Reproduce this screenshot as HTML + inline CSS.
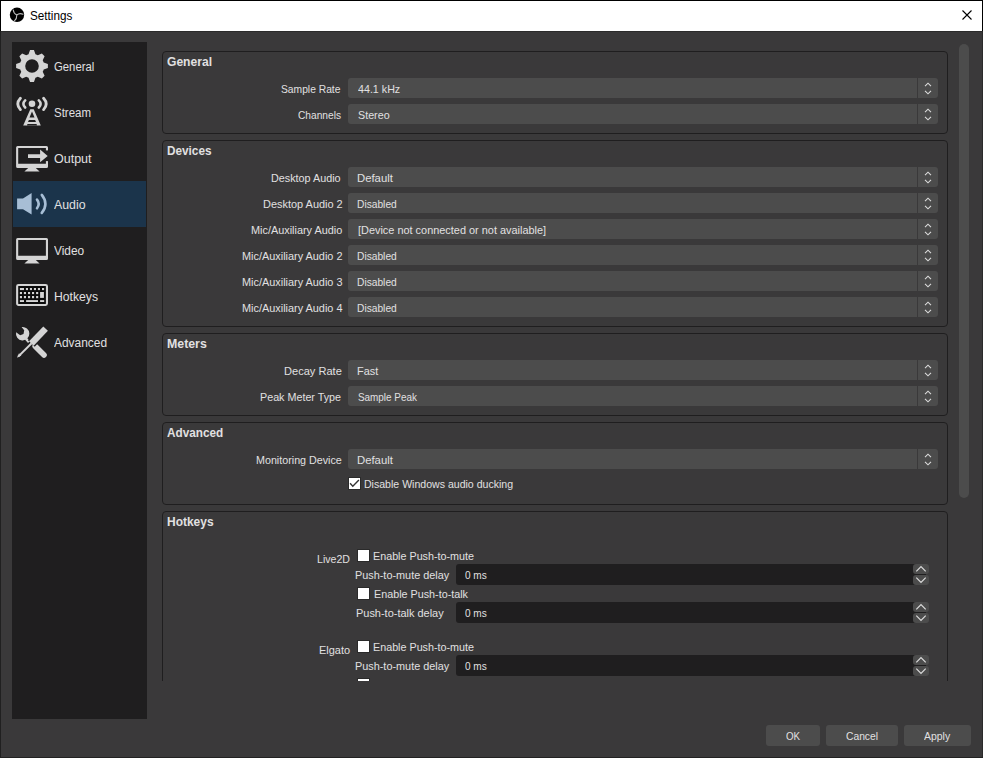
<!DOCTYPE html>
<html><head><meta charset="utf-8"><title>Settings</title><style>
html,body{margin:0;padding:0;}
body{width:983px;height:758px;overflow:hidden;background:#3a393a;position:relative;
 font-family:"Liberation Sans",sans-serif;font-size:11px;color:#e1e0e1;}
.r{position:absolute;}
svg{display:block;}
.t{position:absolute;white-space:nowrap;line-height:13px;letter-spacing:-0.25px;}
.title{position:absolute;left:0;top:0;width:983px;height:31px;background:#fff;}
.vp{position:absolute;left:0;top:0;width:983px;height:681px;overflow:hidden;}
.gb{position:absolute;left:162px;width:786px;border:1px solid #1f1e1f;border-radius:4px;box-sizing:border-box;}
.cb{position:absolute;left:348px;width:590px;height:20px;background:#4c4c4c;border-radius:3px;}
.ck{position:absolute;width:11px;height:11px;background:#fff;box-shadow:0 0 0 1px #2a2a2a;}
.sp{position:absolute;left:456px;width:470px;height:21px;background:#1f1e1f;border-radius:3px;}
.sb{position:absolute;left:913px;width:16px;height:10px;background:#4c4c4c;border-radius:3px;}
.btn{position:absolute;top:725px;height:21px;background:#4c4c4c;border-radius:3px;text-align:center;line-height:21px;padding-top:1px;box-sizing:border-box;letter-spacing:-0.2px;}
</style></head>
<body>
<div class="title"></div>
<div class="r" style="left:1px;top:31px;width:981px;height:1px;background:#2b2b2b"></div>
<svg class="r" style="left:8px;top:6px" width="18" height="18" viewBox="0 0 18 18"><circle cx="9" cy="8.8" r="7.2" fill="#000"/><path d="M8.8 9.0 Q5.6 7.6 5.3 4.0 M8.8 9.0 Q11.6 6.6 15.0 8.3 M8.8 9.0 Q9.0 12.6 6.4 14.9" fill="none" stroke="#bdbdbd" stroke-width="1.1" stroke-linecap="round"/></svg>
<div class="t" style="top:10px;left:30.2px;letter-spacing:0;transform:scaleX(0.9767);transform-origin:0 0;color:#000;font-size:12px;">Settings</div>
<svg class="r" style="left:961px;top:9px" width="13" height="13" viewBox="0 0 13 13"><path d="M1.5 1.5 L10.5 10.5 M10.5 1.5 L1.5 10.5" stroke="#000" stroke-width="1.1"/></svg>
<div class="r" style="left:12px;top:42px;width:135px;height:677px;background:#1f1e1f;"></div>
<div class="r" style="left:13px;top:181px;width:133px;height:46px;background:#1b344b;"></div>
<div class="r" style="left:16px;top:50px"><svg width="32" height="32" viewBox="0 0 32 32"><path d="M12.54 4.30 L14.05 0.12 L17.95 0.12 L19.46 4.30 A12.2 12.2 0 0 1 21.82 5.28 L25.85 3.39 L28.61 6.15 L26.72 10.18 A12.2 12.2 0 0 1 27.70 12.54 L31.88 14.05 L31.88 17.95 L27.70 19.46 A12.2 12.2 0 0 1 26.72 21.82 L28.61 25.85 L25.85 28.61 L21.82 26.72 A12.2 12.2 0 0 1 19.46 27.70 L17.95 31.88 L14.05 31.88 L12.54 27.70 A12.2 12.2 0 0 1 10.18 26.72 L6.15 28.61 L3.39 25.85 L5.28 21.82 A12.2 12.2 0 0 1 4.30 19.46 L0.12 17.95 L0.12 14.05 L4.30 12.54 A12.2 12.2 0 0 1 5.28 10.18 L3.39 6.15 L6.15 3.39 L10.18 5.28 A12.2 12.2 0 0 1 12.54 4.30 Z M16 9.2 A6.8 6.8 0 1 0 16 22.8 A6.8 6.8 0 1 0 16 9.2 Z" fill="#d4d4d4" fill-rule="evenodd"/></svg></div>
<div class="t" style="top:61px;left:54px;letter-spacing:0;transform:scaleX(0.9429);transform-origin:0 0;font-size:12px;">General</div>
<div class="r" style="left:14px;top:94px"><svg width="36" height="36" viewBox="0 0 36 36"><circle cx="18" cy="9.7" r="3.3" fill="#d4d4d4"/><path d="M6.4 4.2 Q1.2 9.9 6.4 15.6" fill="none" stroke="#d4d4d4" stroke-width="2.8" stroke-linecap="round"/><path d="M29.6 4.2 Q34.8 9.9 29.6 15.6" fill="none" stroke="#d4d4d4" stroke-width="2.8" stroke-linecap="round"/><path d="M11.2 6.4 Q7.6 9.9 11.2 13.5" fill="none" stroke="#d4d4d4" stroke-width="2.6" stroke-linecap="round"/><path d="M24.8 6.4 Q28.4 9.9 24.8 13.5" fill="none" stroke="#d4d4d4" stroke-width="2.6" stroke-linecap="round"/><path d="M16.3 15.2 L19.7 15.2 L26.8 31.6 L9.2 31.6 Z M18 17.6 L20.5 23.5 L15.5 23.5 Z M14.9 25.9 L21.1 25.9 L22.0 28.1 L14.0 28.1 Z M13.5 30 L22.5 30 L23.2 31.7 L12.8 31.7 Z" fill="#d4d4d4" fill-rule="evenodd"/></svg></div>
<div class="t" style="top:107px;left:54px;letter-spacing:0;transform:scaleX(0.9553);transform-origin:0 0;font-size:12px;">Stream</div>
<div class="r" style="left:14px;top:140px"><svg width="36" height="36" viewBox="0 0 36 36"><path d="M3.6 5.9 L32.5 5.9 Q34 5.9 34 7.4 L34 26.5 Q34 28 32.5 28 L3.6 28 Q2.1 28 2.1 26.5 L2.1 7.4 Q2.1 5.9 3.6 5.9 Z M4.2 8.0 L4.2 23.7 L31.9 23.7 L31.9 8.0 Z" fill="#d4d4d4" fill-rule="evenodd"/><rect x="31" y="10.4" width="4" height="10.7" fill="#1f1e1f"/><path d="M14.2 28 L21.8 28 L25.6 31.6 L10.4 31.6 Z" fill="#d4d4d4"/><path d="M14 14.2 L26.1 14.2 L26.1 9.5 L33.7 16.1 L26.1 22.3 L26.1 18 L14 18 Z" fill="#d4d4d4"/></svg></div>
<div class="t" style="top:153px;left:54px;letter-spacing:0;transform:scaleX(1.0417);transform-origin:0 0;font-size:12px;">Output</div>
<div class="r" style="left:14px;top:186px"><svg width="36" height="36" viewBox="0 0 36 36"><path d="M3.1 12.6 L9 12.6 L17.6 7.1 L17.6 28.5 L9 23.3 L3.1 23.3 Z" fill="#a7bed5"/><path d="M23.0 13.6 Q26.4 17.95 23.0 22.3" fill="none" stroke="#a7bed5" stroke-width="2.6" stroke-linecap="round"/><path d="M27.8 8.9 Q35.0 17.9 27.8 26.9" fill="none" stroke="#a7bed5" stroke-width="2.6" stroke-linecap="round"/></svg></div>
<div class="t" style="top:199px;left:54px;letter-spacing:0;transform:scaleX(1.029);transform-origin:0 0;font-size:12px;">Audio</div>
<div class="r" style="left:14px;top:232px"><svg width="36" height="36" viewBox="0 0 36 36"><path d="M3.6 5.9 L32.5 5.9 Q34 5.9 34 7.4 L34 26.5 Q34 28 32.5 28 L3.6 28 Q2.1 28 2.1 26.5 L2.1 7.4 Q2.1 5.9 3.6 5.9 Z M4.2 8.0 L4.2 23.7 L31.9 23.7 L31.9 8.0 Z" fill="#d4d4d4" fill-rule="evenodd"/><path d="M14.2 28 L21.8 28 L25.6 31.6 L10.4 31.6 Z" fill="#d4d4d4"/></svg></div>
<div class="t" style="top:245px;left:54px;letter-spacing:0;transform:scaleX(0.99);transform-origin:0 0;font-size:12px;">Video</div>
<div class="r" style="left:14px;top:278px"><svg width="36" height="36" viewBox="0 0 36 36"><rect x="3.15" y="6.95" width="29.8" height="20" rx="1.4" fill="#0b0b0b" stroke="#d4d4d4" stroke-width="2.1"/><rect x="5.9" y="10" width="4.10" height="2.10" fill="#d4d4d4"/><rect x="11.9" y="10" width="2.10" height="2.10" fill="#d4d4d4"/><rect x="15.9" y="10" width="2.10" height="2.10" fill="#d4d4d4"/><rect x="19.9" y="10" width="2.10" height="2.10" fill="#d4d4d4"/><rect x="23.9" y="10" width="2.10" height="2.10" fill="#d4d4d4"/><rect x="28.0" y="10" width="2.10" height="2.10" fill="#d4d4d4"/><rect x="5.9" y="14" width="2.10" height="2.10" fill="#d4d4d4"/><rect x="5.9" y="18" width="2.10" height="2.20" fill="#d4d4d4"/><rect x="9.9" y="14" width="2.10" height="2.10" fill="#d4d4d4"/><rect x="9.9" y="18" width="2.10" height="2.20" fill="#d4d4d4"/><rect x="14.0" y="14" width="2.10" height="2.10" fill="#d4d4d4"/><rect x="14.0" y="18" width="2.10" height="2.20" fill="#d4d4d4"/><rect x="18.0" y="14" width="2.10" height="2.10" fill="#d4d4d4"/><rect x="18.0" y="18" width="2.10" height="2.20" fill="#d4d4d4"/><rect x="22.1" y="14" width="2.10" height="2.10" fill="#d4d4d4"/><rect x="22.1" y="18" width="2.10" height="2.20" fill="#d4d4d4"/><rect x="26.1" y="14" width="3.80" height="5.90" fill="#d4d4d4"/><rect x="5.9" y="22.1" width="4.10" height="1.90" fill="#d4d4d4"/><rect x="12.1" y="22.1" width="11.90" height="1.90" fill="#d4d4d4"/><rect x="26.1" y="22.1" width="4.10" height="1.90" fill="#d4d4d4"/></svg></div>
<div class="t" style="top:291px;left:54px;letter-spacing:0;transform:scaleX(1.0167);transform-origin:0 0;font-size:12px;">Hotkeys</div>
<div class="r" style="left:14px;top:324px"><svg width="36" height="36" viewBox="0 0 36 36"><path d="M21.2 22.3 L30.0 31.1" stroke="#d4d4d4" stroke-width="5.6" stroke-linecap="round"/><path d="M7.6 3.1 A6.7 6.7 0 1 1 2.1 8.3 L6.2 11.2 L9.5 10.0 L10.2 6.2 Z" fill="#d4d4d4"/><path d="M11.8 14.6 L15.0 18.2" stroke="#d4d4d4" stroke-width="2.6"/><path d="M31.9 4.3 L17.35 19.45" stroke="#1f1e1f" stroke-width="9.4"/><path d="M31.6 4.6 L17.35 19.45" stroke="#d4d4d4" stroke-width="6.4"/><path d="M17.6 19.2 L4.2 32.6" stroke="#d4d4d4" stroke-width="2.0"/><path d="M3.0 33.8 L5.0 29.2 L7.4 31.6 Z" fill="#d4d4d4"/></svg></div>
<div class="t" style="top:337px;left:54px;letter-spacing:0;transform:scaleX(0.9943);transform-origin:0 0;font-size:12px;">Advanced</div>
<div class="vp">
<div class="gb" style="top:51px;height:83px;"></div>
<div class="t" style="top:56px;left:167px;letter-spacing:0;transform:scaleX(1.0068);transform-origin:0 0;font-weight:bold;font-size:12px;">General</div>
<div class="cb" style="top:78px;"></div>
<div class="r" style="left:917px;top:78px;width:1px;height:20px;background:#3a393a"></div>
<div class="r" style="left:924px;top:82px;width:8px;height:5px"><svg width="8" height="5" viewBox="0 0 8 5"><path d="M1 4.2 L4 1.2 L7 4.2" fill="none" stroke="#dcdcdc" stroke-width="1.1"/></svg></div>
<div class="r" style="left:924px;top:90px;width:8px;height:5px"><svg width="8" height="5" viewBox="0 0 8 5"><path d="M1 0.8 L4 3.8 L7 0.8" fill="none" stroke="#dcdcdc" stroke-width="1.1"/></svg></div>
<div class="t" style="top:83px;left:358.0px;letter-spacing:0;transform:scaleX(0.9721);transform-origin:0 0;">44.1 kHz</div>
<div class="t" style="top:83px;left:281.4px;letter-spacing:0;transform:scaleX(0.9344);transform-origin:0 0;">Sample Rate</div>
<div class="cb" style="top:104px;"></div>
<div class="r" style="left:917px;top:104px;width:1px;height:20px;background:#3a393a"></div>
<div class="r" style="left:924px;top:108px;width:8px;height:5px"><svg width="8" height="5" viewBox="0 0 8 5"><path d="M1 4.2 L4 1.2 L7 4.2" fill="none" stroke="#dcdcdc" stroke-width="1.1"/></svg></div>
<div class="r" style="left:924px;top:116px;width:8px;height:5px"><svg width="8" height="5" viewBox="0 0 8 5"><path d="M1 0.8 L4 3.8 L7 0.8" fill="none" stroke="#dcdcdc" stroke-width="1.1"/></svg></div>
<div class="t" style="top:109px;left:358.0px;letter-spacing:0;transform:scaleX(0.975);transform-origin:0 0;">Stereo</div>
<div class="t" style="top:109px;left:297.7px;letter-spacing:0;transform:scaleX(0.9255);transform-origin:0 0;">Channels</div>
<div class="gb" style="top:140px;height:187px;"></div>
<div class="t" style="top:145px;left:167px;letter-spacing:0;transform:scaleX(0.98);transform-origin:0 0;font-weight:bold;font-size:12px;">Devices</div>
<div class="cb" style="top:167px;"></div>
<div class="r" style="left:917px;top:167px;width:1px;height:20px;background:#3a393a"></div>
<div class="r" style="left:924px;top:171px;width:8px;height:5px"><svg width="8" height="5" viewBox="0 0 8 5"><path d="M1 4.2 L4 1.2 L7 4.2" fill="none" stroke="#dcdcdc" stroke-width="1.1"/></svg></div>
<div class="r" style="left:924px;top:179px;width:8px;height:5px"><svg width="8" height="5" viewBox="0 0 8 5"><path d="M1 0.8 L4 3.8 L7 0.8" fill="none" stroke="#dcdcdc" stroke-width="1.1"/></svg></div>
<div class="t" style="top:172px;left:357.0px;letter-spacing:0;transform:scaleX(1.0294);transform-origin:0 0;">Default</div>
<div class="t" style="top:172px;left:271.3px;letter-spacing:0;transform:scaleX(0.98);transform-origin:0 0;">Desktop Audio</div>
<div class="cb" style="top:193px;"></div>
<div class="r" style="left:917px;top:193px;width:1px;height:20px;background:#3a393a"></div>
<div class="r" style="left:924px;top:197px;width:8px;height:5px"><svg width="8" height="5" viewBox="0 0 8 5"><path d="M1 4.2 L4 1.2 L7 4.2" fill="none" stroke="#dcdcdc" stroke-width="1.1"/></svg></div>
<div class="r" style="left:924px;top:205px;width:8px;height:5px"><svg width="8" height="5" viewBox="0 0 8 5"><path d="M1 0.8 L4 3.8 L7 0.8" fill="none" stroke="#dcdcdc" stroke-width="1.1"/></svg></div>
<div class="t" style="top:198px;left:357.0px;letter-spacing:0;transform:scaleX(0.9286);transform-origin:0 0;">Disabled</div>
<div class="t" style="top:198px;left:262.5px;letter-spacing:0;transform:scaleX(0.9949);transform-origin:0 0;">Desktop Audio 2</div>
<div class="cb" style="top:219px;"></div>
<div class="r" style="left:917px;top:219px;width:1px;height:20px;background:#3a393a"></div>
<div class="r" style="left:924px;top:223px;width:8px;height:5px"><svg width="8" height="5" viewBox="0 0 8 5"><path d="M1 4.2 L4 1.2 L7 4.2" fill="none" stroke="#dcdcdc" stroke-width="1.1"/></svg></div>
<div class="r" style="left:924px;top:231px;width:8px;height:5px"><svg width="8" height="5" viewBox="0 0 8 5"><path d="M1 0.8 L4 3.8 L7 0.8" fill="none" stroke="#dcdcdc" stroke-width="1.1"/></svg></div>
<div class="t" style="top:224px;left:358.0px;letter-spacing:0;transform:scaleX(0.9921);transform-origin:0 0;">[Device not connected or not available]</div>
<div class="t" style="top:224px;left:250.8px;letter-spacing:0;transform:scaleX(0.989);transform-origin:0 0;">Mic/Auxiliary Audio</div>
<div class="cb" style="top:245px;"></div>
<div class="r" style="left:917px;top:245px;width:1px;height:20px;background:#3a393a"></div>
<div class="r" style="left:924px;top:249px;width:8px;height:5px"><svg width="8" height="5" viewBox="0 0 8 5"><path d="M1 4.2 L4 1.2 L7 4.2" fill="none" stroke="#dcdcdc" stroke-width="1.1"/></svg></div>
<div class="r" style="left:924px;top:257px;width:8px;height:5px"><svg width="8" height="5" viewBox="0 0 8 5"><path d="M1 0.8 L4 3.8 L7 0.8" fill="none" stroke="#dcdcdc" stroke-width="1.1"/></svg></div>
<div class="t" style="top:250px;left:357.0px;letter-spacing:0;transform:scaleX(0.9286);transform-origin:0 0;">Disabled</div>
<div class="t" style="top:250px;left:241.8px;letter-spacing:0;transform:scaleX(0.99);transform-origin:0 0;">Mic/Auxiliary Audio 2</div>
<div class="cb" style="top:271px;"></div>
<div class="r" style="left:917px;top:271px;width:1px;height:20px;background:#3a393a"></div>
<div class="r" style="left:924px;top:275px;width:8px;height:5px"><svg width="8" height="5" viewBox="0 0 8 5"><path d="M1 4.2 L4 1.2 L7 4.2" fill="none" stroke="#dcdcdc" stroke-width="1.1"/></svg></div>
<div class="r" style="left:924px;top:283px;width:8px;height:5px"><svg width="8" height="5" viewBox="0 0 8 5"><path d="M1 0.8 L4 3.8 L7 0.8" fill="none" stroke="#dcdcdc" stroke-width="1.1"/></svg></div>
<div class="t" style="top:276px;left:357.0px;letter-spacing:0;transform:scaleX(0.9286);transform-origin:0 0;">Disabled</div>
<div class="t" style="top:276px;left:241.8px;letter-spacing:0;transform:scaleX(0.99);transform-origin:0 0;">Mic/Auxiliary Audio 3</div>
<div class="cb" style="top:297px;"></div>
<div class="r" style="left:917px;top:297px;width:1px;height:20px;background:#3a393a"></div>
<div class="r" style="left:924px;top:301px;width:8px;height:5px"><svg width="8" height="5" viewBox="0 0 8 5"><path d="M1 4.2 L4 1.2 L7 4.2" fill="none" stroke="#dcdcdc" stroke-width="1.1"/></svg></div>
<div class="r" style="left:924px;top:309px;width:8px;height:5px"><svg width="8" height="5" viewBox="0 0 8 5"><path d="M1 0.8 L4 3.8 L7 0.8" fill="none" stroke="#dcdcdc" stroke-width="1.1"/></svg></div>
<div class="t" style="top:302px;left:357.0px;letter-spacing:0;transform:scaleX(0.9286);transform-origin:0 0;">Disabled</div>
<div class="t" style="top:302px;left:241.8px;letter-spacing:0;transform:scaleX(0.99);transform-origin:0 0;">Mic/Auxiliary Audio 4</div>
<div class="gb" style="top:333px;height:83px;"></div>
<div class="t" style="top:338px;left:167px;letter-spacing:0;transform:scaleX(1.0282);transform-origin:0 0;font-weight:bold;font-size:12px;">Meters</div>
<div class="cb" style="top:360px;"></div>
<div class="r" style="left:917px;top:360px;width:1px;height:20px;background:#3a393a"></div>
<div class="r" style="left:924px;top:364px;width:8px;height:5px"><svg width="8" height="5" viewBox="0 0 8 5"><path d="M1 4.2 L4 1.2 L7 4.2" fill="none" stroke="#dcdcdc" stroke-width="1.1"/></svg></div>
<div class="r" style="left:924px;top:372px;width:8px;height:5px"><svg width="8" height="5" viewBox="0 0 8 5"><path d="M1 0.8 L4 3.8 L7 0.8" fill="none" stroke="#dcdcdc" stroke-width="1.1"/></svg></div>
<div class="t" style="top:365px;left:357.0px;letter-spacing:0;transform:scaleX(0.9905);transform-origin:0 0;">Fast</div>
<div class="t" style="top:365px;left:284.2px;letter-spacing:0;transform:scaleX(1.0054);transform-origin:0 0;">Decay Rate</div>
<div class="cb" style="top:386px;"></div>
<div class="r" style="left:917px;top:386px;width:1px;height:20px;background:#3a393a"></div>
<div class="r" style="left:924px;top:390px;width:8px;height:5px"><svg width="8" height="5" viewBox="0 0 8 5"><path d="M1 4.2 L4 1.2 L7 4.2" fill="none" stroke="#dcdcdc" stroke-width="1.1"/></svg></div>
<div class="r" style="left:924px;top:398px;width:8px;height:5px"><svg width="8" height="5" viewBox="0 0 8 5"><path d="M1 0.8 L4 3.8 L7 0.8" fill="none" stroke="#dcdcdc" stroke-width="1.1"/></svg></div>
<div class="t" style="top:391px;left:358.0px;letter-spacing:0;transform:scaleX(0.9);transform-origin:0 0;">Sample Peak</div>
<div class="t" style="top:391px;left:260.4px;letter-spacing:0;transform:scaleX(0.9768);transform-origin:0 0;">Peak Meter Type</div>
<div class="gb" style="top:422px;height:83px;"></div>
<div class="t" style="top:427px;left:167px;letter-spacing:0;transform:scaleX(0.9789);transform-origin:0 0;font-weight:bold;font-size:12px;">Advanced</div>
<div class="cb" style="top:449px;"></div>
<div class="r" style="left:917px;top:449px;width:1px;height:20px;background:#3a393a"></div>
<div class="r" style="left:924px;top:453px;width:8px;height:5px"><svg width="8" height="5" viewBox="0 0 8 5"><path d="M1 4.2 L4 1.2 L7 4.2" fill="none" stroke="#dcdcdc" stroke-width="1.1"/></svg></div>
<div class="r" style="left:924px;top:461px;width:8px;height:5px"><svg width="8" height="5" viewBox="0 0 8 5"><path d="M1 0.8 L4 3.8 L7 0.8" fill="none" stroke="#dcdcdc" stroke-width="1.1"/></svg></div>
<div class="t" style="top:454px;left:357.0px;letter-spacing:0;transform:scaleX(1.0294);transform-origin:0 0;">Default</div>
<div class="t" style="top:454px;left:255.7px;letter-spacing:0;transform:scaleX(0.9747);transform-origin:0 0;">Monitoring Device</div>
<div class="ck" style="left:349px;top:478px;"><svg width="12" height="12" viewBox="0 0 12 12" style="position:absolute;left:0;top:0;overflow:visible"><path d="M1.1 5.3 L3.8 8.3 L9.9 2.1" fill="none" stroke="#333" stroke-width="1.4"/></svg></div>
<div class="t" style="top:478px;left:364.3px;letter-spacing:0;transform:scaleX(0.9597);transform-origin:0 0;">Disable Windows audio ducking</div>
<div class="gb" style="top:511px;height:400px;"></div>
<div class="t" style="top:516px;left:167px;letter-spacing:0;transform:scaleX(0.9979);transform-origin:0 0;font-weight:bold;font-size:12px;">Hotkeys</div>
<div class="t" style="top:553px;left:317.3px;letter-spacing:0;transform:scaleX(0.9606);transform-origin:0 0;">Live2D</div>
<div class="ck" style="left:358px;top:550px;"></div>
<div class="t" style="top:550px;left:373.3px;letter-spacing:0;transform:scaleX(0.9775);transform-origin:0 0;">Enable Push-to-mute</div>
<div class="t" style="top:569px;left:355.4px;letter-spacing:0;transform:scaleX(0.9874);transform-origin:0 0;">Push-to-mute delay</div>
<div class="sp" style="top:564px;"></div>
<div class="sb" style="top:564px;"></div>
<div class="sb" style="top:575px;"></div>
<div class="r" style="left:916px;top:566px;width:10px;height:6px"><svg width="10" height="6" viewBox="0 0 10 6" style="overflow:visible"><path d="M0.3 5.4 L5 0.7 L9.7 5.4" fill="none" stroke="#dcdcdc" stroke-width="1.2"/></svg></div>
<div class="r" style="left:916px;top:577px;width:10px;height:6px"><svg width="10" height="6" viewBox="0 0 10 6" style="overflow:visible"><path d="M0.3 0.6 L5 5.3 L9.7 0.6" fill="none" stroke="#dcdcdc" stroke-width="1.2"/></svg></div>
<div class="t" style="top:569px;left:464.8px;letter-spacing:0;transform:scaleX(0.9125);transform-origin:0 0;">0 ms</div>
<div class="ck" style="left:358px;top:588px;"></div>
<div class="t" style="top:588px;left:373.5px;letter-spacing:0;transform:scaleX(0.9789);transform-origin:0 0;">Enable Push-to-talk</div>
<div class="t" style="top:607px;left:355.7px;letter-spacing:0;transform:scaleX(0.9954);transform-origin:0 0;">Push-to-talk delay</div>
<div class="sp" style="top:602px;"></div>
<div class="sb" style="top:602px;"></div>
<div class="sb" style="top:613px;"></div>
<div class="r" style="left:916px;top:604px;width:10px;height:6px"><svg width="10" height="6" viewBox="0 0 10 6" style="overflow:visible"><path d="M0.3 5.4 L5 0.7 L9.7 5.4" fill="none" stroke="#dcdcdc" stroke-width="1.2"/></svg></div>
<div class="r" style="left:916px;top:615px;width:10px;height:6px"><svg width="10" height="6" viewBox="0 0 10 6" style="overflow:visible"><path d="M0.3 0.6 L5 5.3 L9.7 0.6" fill="none" stroke="#dcdcdc" stroke-width="1.2"/></svg></div>
<div class="t" style="top:607px;left:464.8px;letter-spacing:0;transform:scaleX(0.9125);transform-origin:0 0;">0 ms</div>
<div class="t" style="top:644px;left:319.4px;letter-spacing:0;transform:scaleX(0.9967);transform-origin:0 0;">Elgato</div>
<div class="ck" style="left:358px;top:641px;"></div>
<div class="t" style="top:641px;left:373.3px;letter-spacing:0;transform:scaleX(0.9775);transform-origin:0 0;">Enable Push-to-mute</div>
<div class="t" style="top:660px;left:355.4px;letter-spacing:0;transform:scaleX(0.9874);transform-origin:0 0;">Push-to-mute delay</div>
<div class="sp" style="top:655px;"></div>
<div class="sb" style="top:655px;"></div>
<div class="sb" style="top:666px;"></div>
<div class="r" style="left:916px;top:657px;width:10px;height:6px"><svg width="10" height="6" viewBox="0 0 10 6" style="overflow:visible"><path d="M0.3 5.4 L5 0.7 L9.7 5.4" fill="none" stroke="#dcdcdc" stroke-width="1.2"/></svg></div>
<div class="r" style="left:916px;top:668px;width:10px;height:6px"><svg width="10" height="6" viewBox="0 0 10 6" style="overflow:visible"><path d="M0.3 0.6 L5 5.3 L9.7 0.6" fill="none" stroke="#dcdcdc" stroke-width="1.2"/></svg></div>
<div class="t" style="top:660px;left:464.8px;letter-spacing:0;transform:scaleX(0.9125);transform-origin:0 0;">0 ms</div>
<div class="ck" style="left:358px;top:679px;"></div>
<div class="t" style="top:679px;left:373.5px;letter-spacing:0;transform:scaleX(0.9789);transform-origin:0 0;">Enable Push-to-talk</div>
<div class="t" style="top:698px;left:355.7px;letter-spacing:0;transform:scaleX(0.9954);transform-origin:0 0;">Push-to-talk delay</div>
<div class="sp" style="top:693px;"></div>
<div class="sb" style="top:693px;"></div>
<div class="sb" style="top:704px;"></div>
<div class="r" style="left:916px;top:695px;width:10px;height:6px"><svg width="10" height="6" viewBox="0 0 10 6" style="overflow:visible"><path d="M0.3 5.4 L5 0.7 L9.7 5.4" fill="none" stroke="#dcdcdc" stroke-width="1.2"/></svg></div>
<div class="r" style="left:916px;top:706px;width:10px;height:6px"><svg width="10" height="6" viewBox="0 0 10 6" style="overflow:visible"><path d="M0.3 0.6 L5 5.3 L9.7 0.6" fill="none" stroke="#dcdcdc" stroke-width="1.2"/></svg></div>
<div class="t" style="top:698px;left:464.8px;letter-spacing:0;transform:scaleX(0.9125);transform-origin:0 0;">0 ms</div>
</div>
<div class="r" style="left:959px;top:44px;width:10px;height:454px;background:#4c4c4c;border-radius:5px;"></div>
<div class="btn" style="left:766px;width:54px;"></div>
<div class="t" style="top:730px;left:785.6px;letter-spacing:0;transform:scaleX(0.8875);transform-origin:0 0;left:785.6px">OK</div>
<div class="btn" style="left:826px;width:72px;"></div>
<div class="t" style="top:730px;left:845.5px;letter-spacing:0;transform:scaleX(0.9353);transform-origin:0 0;left:845.5px">Cancel</div>
<div class="btn" style="left:904px;width:67px;"></div>
<div class="t" style="top:730px;left:923.7px;letter-spacing:0;transform:scaleX(0.95);transform-origin:0 0;left:923.7px">Apply</div>
<div class="r" style="left:0px;top:0px;width:983px;height:1px;background:#000;"></div>
<div class="r" style="left:0px;top:0px;width:1px;height:758px;background:#202020;"></div>
<div class="r" style="left:0px;top:0px;width:1px;height:31px;background:#000;"></div>
<div class="r" style="left:982px;top:0px;width:1px;height:758px;background:#2a2a2a;"></div>
<div class="r" style="left:982px;top:0px;width:1px;height:31px;background:#000;"></div>
<div class="r" style="left:0px;top:757px;width:983px;height:1px;background:#222;"></div>
</body></html>
